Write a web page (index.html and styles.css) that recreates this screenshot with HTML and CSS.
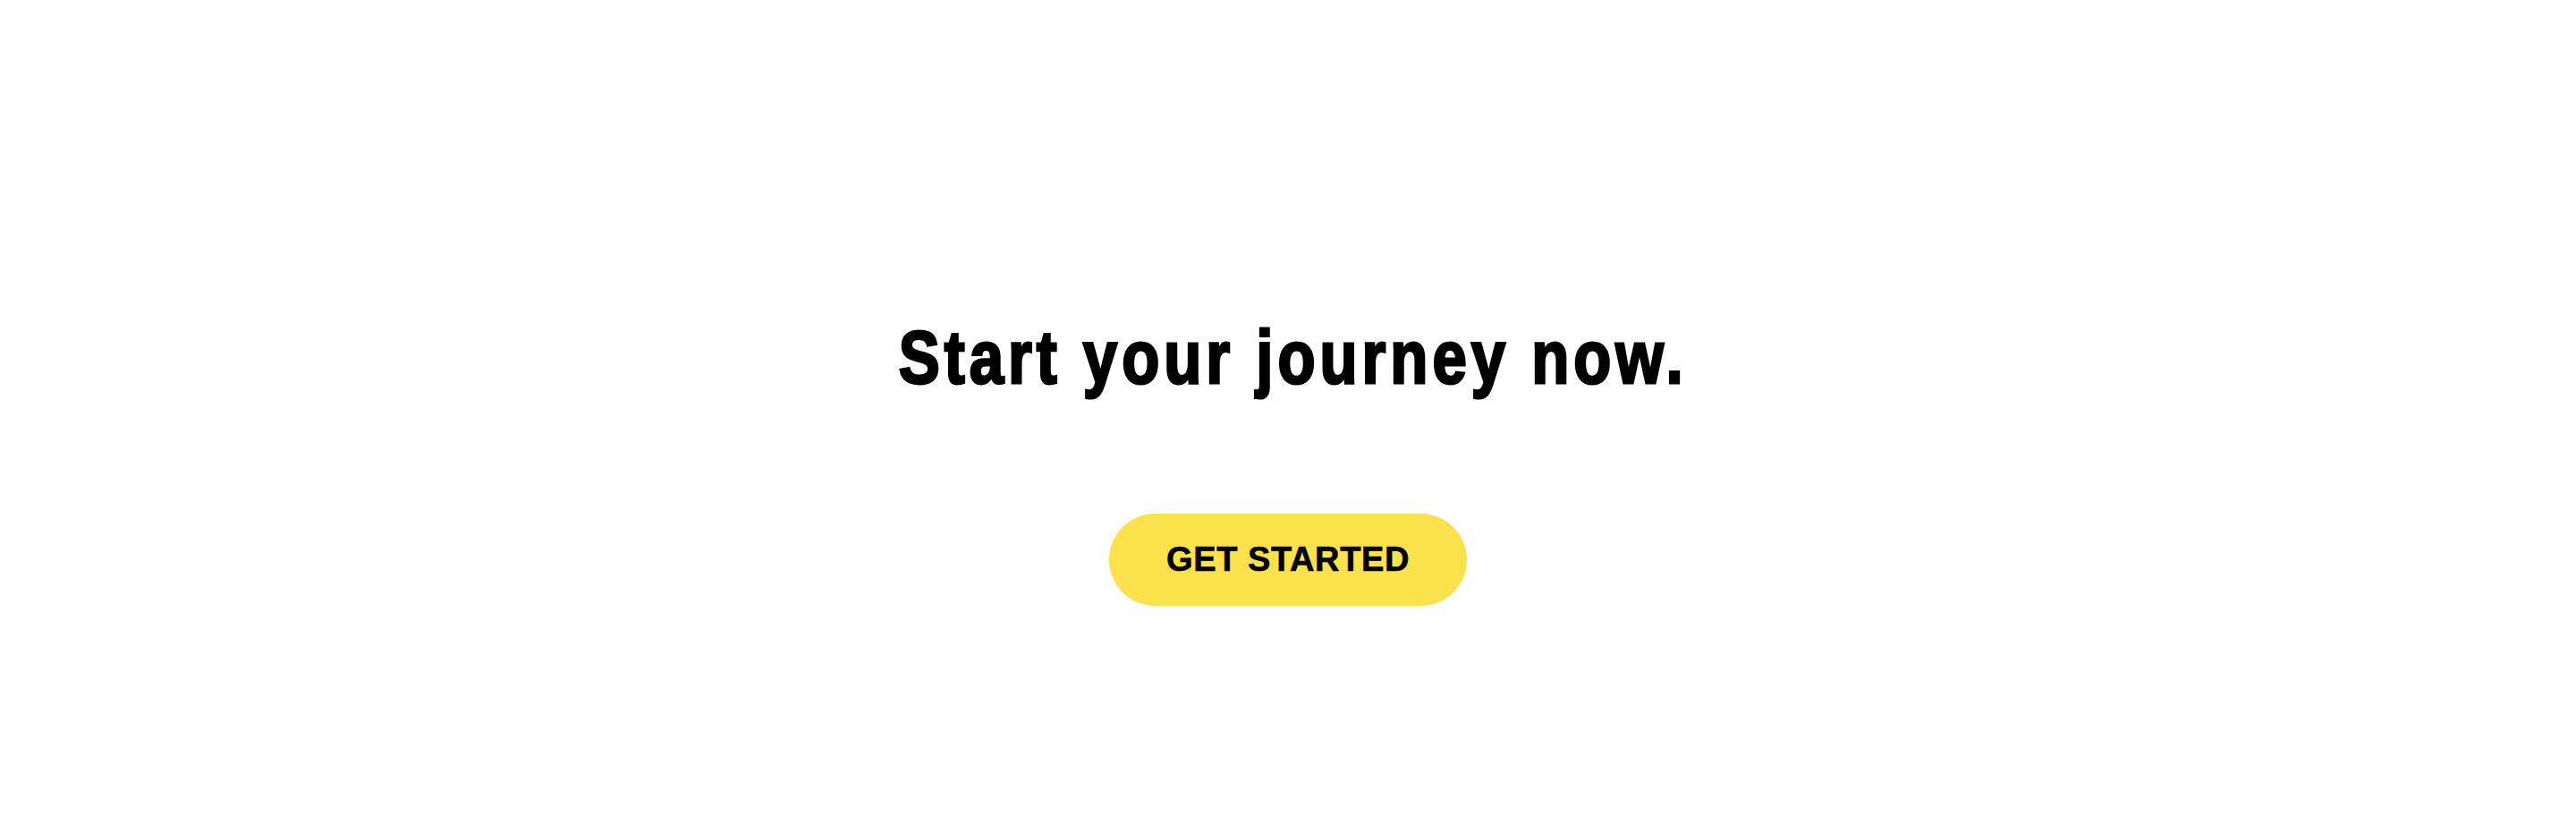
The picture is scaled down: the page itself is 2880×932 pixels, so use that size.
FILE: index.html
```html
<!DOCTYPE html>
<html lang="en">
<head>
<meta charset="utf-8">
<title>Start your journey now.</title>
<link rel="stylesheet" href="styles.css">
</head>
<body>
<main class="cta">
  <h1 class="cta-title">Start your journey now.</h1>
  <a class="cta-button" href="#">GET STARTED</a>
</main>
</body>
</html>
```

FILE: styles.css
```css
html, body {
  margin: 0;
  padding: 0;
  background: #ffffff;
}
body {
  font-family: "Liberation Sans", Arial, Helvetica, sans-serif;
  color: #000;
}
.cta {
  height: 932px;
  box-sizing: border-box;
  display: flex;
  flex-direction: column;
  align-items: center;
  padding-top: 346px;
}
.cta-title {
  margin: 0 0 0 12px;
  font-family: "Liberation Sans", Arial, sans-serif;
  font-size: 84px;
  font-weight: 700;
  line-height: 106px;
  letter-spacing: 6.1px;
  white-space: nowrap;
  -webkit-text-stroke: 3px #000;
  transform: scaleX(0.82);
  transform-origin: center;
}
.cta-button {
  margin-top: 122px;
  width: 400px;
  height: 103px;
  border-radius: 52px;
  background: #fbe24c;
  color: #000;
  text-decoration: none;
  display: flex;
  align-items: center;
  justify-content: center;
  font-size: 38px;
  font-weight: 700;
  letter-spacing: 0.6px;
  -webkit-text-stroke: 0.6px #000;
}
```
